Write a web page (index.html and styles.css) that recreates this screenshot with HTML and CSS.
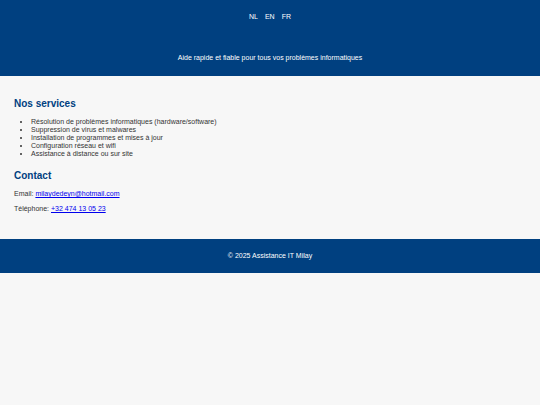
FILE: index.html
```html
<!DOCTYPE html>
<html lang="fr">
<head>
    <meta charset="UTF-8">
    <meta name="viewport" content="width=device-width, initial-scale=1.0">
    <title>Assistance IT Milay</title>
    <link rel="stylesheet" href="styles.css">
</head>
<body>
    <header>
        <nav class="lang-switch">
            <a href="#nl">NL</a>
            <a href="#en">EN</a>
            <a href="#fr">FR</a>
        </nav>
        <p>Aide rapide et fiable pour tous vos problèmes informatiques</p>
    </header>

    <main>
        <section class="services">
            <h2>Nos services</h2>
            <ul>
                <li>Résolution de problèmes informatiques (hardware/software)</li>
                <li>Suppression de virus et malwares</li>
                <li>Installation de programmes et mises à jour</li>
                <li>Configuration réseau et wifi</li>
                <li>Assistance à distance ou sur site</li>
            </ul>
        </section>

        <section class="contact">
            <h2>Contact</h2>
            <p>Email: <a href="mailto:milaydedeyn@hotmail.com">milaydedeyn@hotmail.com</a></p>
            <p>Téléphone: <a href="tel:+32474130523">+32 474 13 05 23</a></p>
        </section>
    </main>

    <footer>
        <p>© 2025 Assistance IT Milay</p>
    </footer>
</body>
</html>
```

FILE: styles.css
```css
body {
    font-family: "Liberation Sans", Arial, sans-serif;
    font-size: 7px;
    line-height: 8px;
    margin: 0;
    background: #f7f7f7;
    color: #333;
}

header {
    background: #004080;
    color: white;
    padding: 13px 14px 14px;
    text-align: center;
}

header p {
    margin: 33px 0 0;
}

.lang-switch {
    display: flex;
    justify-content: center;
    gap: 7px;
}

.lang-switch a {
    color: white;
    text-decoration: none;
}

main {
    padding: 14px 14px 19px;
}

h2 {
    color: #004080;
    font-size: 10px;
    line-height: 12px;
    margin: 8px 0;
}

ul {
    margin: 0 0 12px;
    padding-left: 17px;
}

.contact p {
    margin: 0 0 7px;
}

footer {
    background: #004080;
    color: white;
    padding: 13px;
    text-align: center;
}

footer p {
    margin: 0;
}
```
